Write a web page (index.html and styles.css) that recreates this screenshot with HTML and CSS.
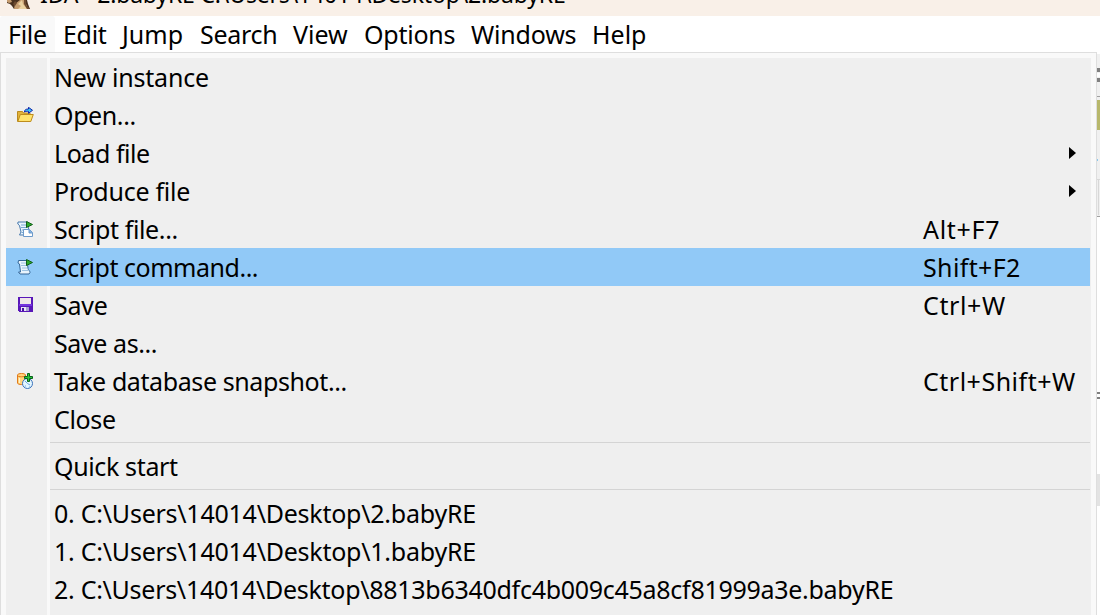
FILE: index.html
```html
<!DOCTYPE html>
<html lang="en">
<head>
<meta charset="utf-8">
<title>IDA - 2.babyRE</title>
<link rel="stylesheet" href="styles.css">
</head>
<body>
<div class="window">
  <header class="titlebar">
    <svg class="app-icon" width="24" height="9" viewBox="0 0 24 9">
      <path fill="#49301e" d="M0 0h20l1 4 2 5H7L5 6 3 4 0 3z"/>
      <path fill="#c69d70" d="M0 0h4l1 2-3 1-2-1zM8 4l5-4h5l1 4 2 5H7z"/>
      <path fill="#ead2a1" d="M11 4l4-4 1 4 4 5h-9l3-3z"/>
      <path fill="#6c4a2f" d="M8 1l2 2-2 3-2-2zM17 0h2v5l4 4h-3l-3-5z"/>
    </svg>
    <span class="title">IDA - 2.babyRE C:\Users\14014\Desktop\2.babyRE</span>
  </header>
  <nav class="menubar">
    <span class="tab tab-file">File</span>
    <span class="tab tab-edit">Edit</span>
    <span class="tab tab-jump">Jump</span>
    <span class="tab tab-search">Search</span>
    <span class="tab tab-view">View</span>
    <span class="tab tab-options">Options</span>
    <span class="tab tab-windows">Windows</span>
    <span class="tab tab-help">Help</span>
  </nav>
  <main class="workspace">
    <div class="menu">
      <div class="item"><span class="icon"></span><span class="label"><span class="t-new">New instance</span></span></div>
      <div class="item"><span class="icon">
        <svg width="17" height="16" viewBox="0 0 17 16"><path d="M.5 14.5v-10h5l1 1.500h6.500v2" fill="#e2b33a" stroke="#b98a20"/><path d="M.8 14.500l2.500-7h13l-2.500 7z" fill="#ffe36c" stroke="#bd8c1c"/><path d="M7.500 5c0-2 1-3 4-3V.3l4 3-4 3V4.300c-2 0-3 0-4 .7z" fill="#39c6f5" stroke="#1020a8"/></svg>
      </span><span class="label"><span class="t-open">Open...</span></span></div>
      <div class="item"><span class="icon"></span><span class="label"><span class="t-load">Load file</span></span><i class="arrow"></i></div>
      <div class="item"><span class="icon"></span><span class="label"><span class="t-produce">Produce file</span></span><i class="arrow"></i></div>
      <div class="item"><span class="icon">
        <svg width="17" height="16" viewBox="0 0 17 16"><path d="M1 1h10v3l1 6 1 4H2.500L4 11 2.500 4.500 .8 3z" fill="#e9f4fd" stroke="#4779ad"/><path d="M4 4h6M4 6.500h6M5 9h5M4.500 11.500h5" stroke="#79a9d4"/><path d="M6.500 8.500h6l3 3v4h-9z" fill="#fff" stroke="#6d9aca"/><path d="M12 8.500v3.500h3.500" fill="#79abe0" stroke="#6d9aca"/><path d="M9.500.5l6 3-6 3z" fill="#2daa2d" stroke="#116018"/></svg>
      </span><span class="label"><span class="t-sfile">Script file...</span></span><span class="key"><span class="k-alt">Alt+F7</span></span></div>
      <div class="item selected"><span class="icon">
        <svg width="17" height="16" viewBox="0 0 17 16"><path d="M1.500 1.500h9v3l.5 5c.3 2 2 2 2 4l-1 1.500H3L1.500 13H3.500L2.500 5 1 4z" fill="#e9f4fd" stroke="#346799"/><path d="M4 4h6M4 6.500h6M5 9h5M5 11.500h6" stroke="#9cc2e2"/><path d="M9.500.5l6 3-6 3z" fill="#2daa2d" stroke="#116018"/></svg>
      </span><span class="label"><span class="t-scmd">Script command...</span></span><span class="key"><span class="k-shift">Shift+F2</span></span></div>
      <div class="item"><span class="icon">
        <svg class="disk" width="15" height="15" viewBox="0 0 15 15" shape-rendering="crispEdges"><path d="M0 0h15v15H1l-1-1z" fill="#5817b8"/><path d="M2 1h11v6H2z" fill="#eee5e8"/><path d="M1 7h13v2H1z" fill="#7434df"/><path d="M3 10h8v4H3z" fill="#e8e4f6"/><path d="M4 11h2v3H4z" fill="#4710a0"/><path d="M8 10h3v4H8z" fill="#a9a0cf"/></svg>
      </span><span class="label"><span class="t-save">Save</span></span><span class="key"><span class="k-ctrl">Ctrl+W</span></span></div>
      <div class="item"><span class="icon"></span><span class="label"><span class="t-saveas">Save as...</span></span></div>
      <div class="item"><span class="icon">
        <svg width="17" height="16" viewBox="0 0 17 16"><path d="M.5 2v8c0 2 8 2 8 0V2c0-2-8-2-8 0z" fill="#ffd47c" stroke="#e17a1c"/><path d="M.5 2.500c0 1.700 8 1.700 8 0" fill="none" stroke="#e17a1c"/><path d="M2.500 5v5" stroke="#fff3cd"/><circle cx="10.500" cy="10.500" r="5" fill="#e2f5ff" stroke="#3972ba"/><path d="M8 8l2.500 2.500L13 12M8 13h1M12 14h1" stroke="#6ca9df" fill="none"/><path d="M10.500.5h2v3h3v2h-3v3h-2v-3h-3v-2h3z" fill="#28c538" stroke="#07601a"/></svg>
      </span><span class="label"><span class="t-snap">Take database snapshot...</span></span><span class="key"><span class="k-snap">Ctrl+Shift+W</span></span></div>
      <div class="item"><span class="icon"></span><span class="label"><span class="t-close">Close</span></span></div>
      <div class="separator"></div>
      <div class="item"><span class="icon"></span><span class="label"><span class="t-quick">Quick start</span></span></div>
      <div class="separator"></div>
      <div class="item"><span class="icon"></span><span class="label"><span class="t-path">0. C:\Users\14014\Desktop\2.babyRE</span></span></div>
      <div class="item"><span class="icon"></span><span class="label"><span class="t-path">1. C:\Users\14014\Desktop\1.babyRE</span></span></div>
      <div class="item"><span class="icon"></span><span class="label"><span class="t-hash">2. C:\Users\14014\Desktop\8813b6340dfc4b009c45a8cf81999a3e.babyRE</span></span></div>
    </div>
    <svg class="edge" width="3" height="563" viewBox="0 0 3 563" shape-rendering="crispEdges">
      <path fill="#fff" d="M0 0h3v563H0z"/>
      <path fill="#f0f0f0" d="M0 2h3v162H0z"/>
      <path fill="#808080" d="M0 16h3v4H0zM0 26h3v4H0z"/>
      <path fill="#fff" d="M0 21h3v4H0z"/>
      <path fill="#a0a0a0" d="M0 44h3v1H0zM0 164h3v1H0z"/>
      <path fill="#b8b86c" d="M0 48h3v30H0z"/>
      <path fill="#8cc8ec" d="M0 107h1v2H0z"/>
      <path fill="#d8d8d8" d="M0 127h3v1H0zM1 128h1v35H1z"/>
      <path fill="#808080" d="M0 340h3v2H0zM0 345h3v2H0z"/>
      <path fill="#e3e3e3" d="M0 422h3v32H0z"/>
    </svg>
  </main>
</div>
</body>
</html>
```
FILE: styles.css
```css
body {
  margin: 0;
  overflow: hidden;
  color: #000;
  font: 25px/38px "Noto Sans", sans-serif;
}
.window { width: 1100px; height: 615px; overflow: hidden; background: #fff; }
.titlebar {
  display: flex;
  align-items: flex-start;
  gap: 9px;
  height: 16px;
  padding-left: 7px;
  overflow: hidden;
  background: #f9f0e8;
}
.app-icon { flex: none; }
.title { margin-top: -25px; font-size: 23px; line-height: 38px; letter-spacing: -.17px; white-space: pre; }
.menubar { display: flex; height: 36px; background: #fff; }
.tab { box-sizing: border-box; flex: none; height: 36px; padding-left: 8px; line-height: 37px; }
.tab-file { width: 55px; letter-spacing: -.3px; background: #f9f9f9; border-radius: 3px 3px 0 0; }
.tab-edit { width: 59px; letter-spacing: -.3px; }
.tab-jump { width: 78px; }
.tab-search { width: 93px; letter-spacing: -.3px; }
.tab-view { width: 71px; }
.tab-options { width: 107px; letter-spacing: -.25px; }
.tab-windows { width: 121px; letter-spacing: -.2px; }
.tab-help { width: 70px; }
.workspace { display: flex; height: 563px; }
.menu {
  box-sizing: border-box;
  width: 1097px;
  height: 580px;
  padding: 5px 6px 0 5px;
  border: 1px solid #dedede;
  border-bottom: 0;
  background: linear-gradient(90deg, #f9f9f9 5px, #efefef 5px 46px, #f9f9f9 46px 49px, #efefef 49px 1090px, #f9f9f9 1090px) 0 5px no-repeat #f9f9f9;
}
.item { display: flex; height: 38px; }
.icon { flex: none; width: 37px; padding: 11px 0 0 11px; line-height: 0; }
.icon svg { display: block; }
.icon .disk { margin-left: 1px; }
.label { flex: 1; white-space: pre; }
.key { flex: none; width: 167px; white-space: pre; }
.selected { background: #91c9f7; }
.t-new { letter-spacing: -.2px; }
.t-open { letter-spacing: -.4px; }
.t-load { letter-spacing: -.45px; }
.t-produce { letter-spacing: -.25px; }
.t-sfile { letter-spacing: -.38px; }
.t-scmd { letter-spacing: -.48px; }
.t-save { letter-spacing: -.25px; }
.t-saveas { letter-spacing: -.4px; }
.t-snap { letter-spacing: -.4px; }
.t-close { letter-spacing: -.35px; }
.t-quick { letter-spacing: -.36px; }
.t-path { letter-spacing: -.24px; }
.t-hash { letter-spacing: -.28px; }
.k-alt { letter-spacing: .7px; }
.k-shift { letter-spacing: .35px; }
.k-ctrl { letter-spacing: .6px; }
.k-snap { letter-spacing: .5px; }
.arrow {
  width: 0;
  height: 0;
  margin: 13px 14px 0 0;
  border-left: 7px solid #000;
  border-top: 6px solid transparent;
  border-bottom: 6px solid transparent;
}
.separator { height: 9px; margin-left: 44px; background: linear-gradient(#d4d4d4, #d4d4d4) 0 4px / 100% 1px no-repeat; }
.edge { flex: none; }
```
